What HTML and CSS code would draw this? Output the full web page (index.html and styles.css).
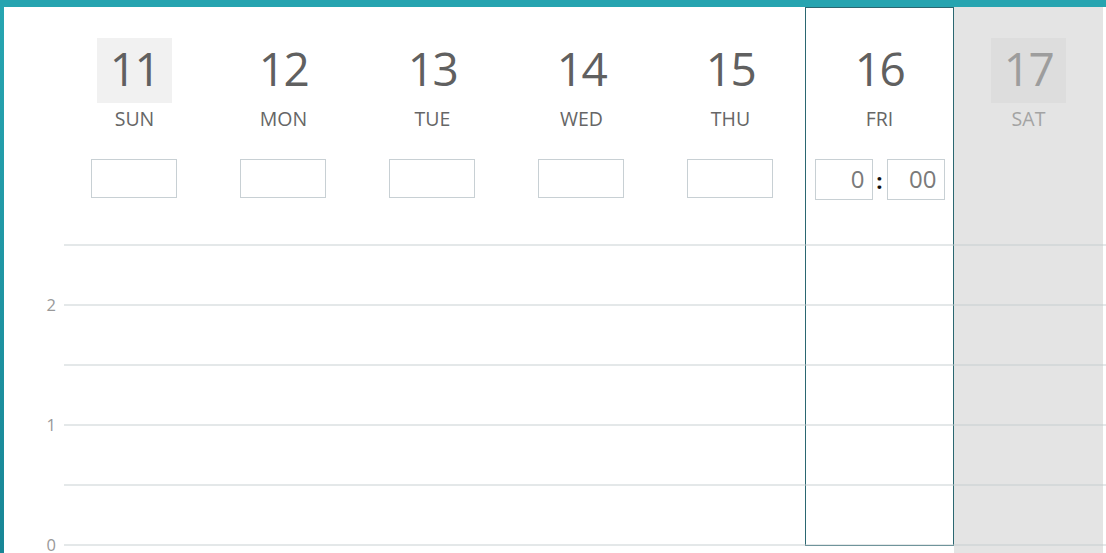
FILE: index.html
```html
<!DOCTYPE html>
<html lang="en">
<head>
    <meta charset="UTF-8" />
    <meta name="viewport" content="width=device-width, initial-scale=1" />
    <title>Week</title>
    <link rel="stylesheet" href="styles.css">
</head>
<body>

<div class="frame">
  <div class="board">
    <div class="columns">
      <div class="axis-space"></div>

      <div class="day">
        <div class="date current">11</div>
        <div class="label">SUN</div>
        <div class="slot"><input class="field" type="text" aria-label="Sunday" /></div>
      </div>
      <div class="day">
        <div class="date">12</div>
        <div class="label">MON</div>
        <div class="slot"><input class="field" type="text" aria-label="Monday" /></div>
      </div>
      <div class="day">
        <div class="date">13</div>
        <div class="label">TUE</div>
        <div class="slot"><input class="field" type="text" aria-label="Tuesday" /></div>
      </div>
      <div class="day">
        <div class="date">14</div>
        <div class="label">WED</div>
        <div class="slot"><input class="field" type="text" aria-label="Wednesday" /></div>
      </div>
      <div class="day">
        <div class="date">15</div>
        <div class="label">THU</div>
        <div class="slot"><input class="field" type="text" aria-label="Thursday" /></div>
      </div>
      <div class="day today">
        <div class="date">16</div>
        <div class="label">FRI</div>
        <div class="slot time">
          <input class="field small" type="text" value="0" aria-label="Hours" />
          <span class="colon">:</span>
          <input class="field small" type="text" value="00" aria-label="Minutes" />
        </div>
      </div>
      <div class="day weekend">
        <div class="date current">17</div>
        <div class="label">SAT</div>
      </div>
    </div>

    <div class="chart">
      <div class="tick"><span class="tick-label"></span><span class="tick-line"></span></div>
      <div class="tick"><span class="tick-label">2</span><span class="tick-line"></span></div>
      <div class="tick"><span class="tick-label"></span><span class="tick-line"></span></div>
      <div class="tick"><span class="tick-label">1</span><span class="tick-line"></span></div>
      <div class="tick"><span class="tick-label"></span><span class="tick-line"></span></div>
      <div class="tick"><span class="tick-label">0</span><span class="tick-line"></span></div>
    </div>
  </div>
</div>

</body>
</html>
```

FILE: styles.css
```css
* { box-sizing: border-box; }
html, body { height: 100%; }
body {
  margin: 0;
  font-family: 'Open Sans', 'Noto Sans', sans-serif;
  color: #606060;
  background: #fff;
  overflow: hidden;
}

.frame {
  height: 100%;
  border-top: 7px solid #26a4b0;
  padding-left: 4px;
  background: linear-gradient(180deg, #27a5b1, #188696);
}

.board {
  position: relative;
  height: 100%;
  background: #fff;
  overflow: hidden;
}

.columns {
  display: flex;
  height: 100%;
}
.axis-space { width: 56px; flex: none; }

.day {
  width: 149px;
  flex: none;
  display: flex;
  flex-direction: column;
  align-items: center;
}
.day.today {
  height: 539px;
  box-shadow: inset 0 0 0 1px #2b6771;
}
.day.weekend {
  background: #e4e4e4;
  color: #9d9d9d;
}

.date {
  margin-top: 31px;
  width: 75px;
  height: 65px;
  padding-bottom: 5px;
  display: flex;
  align-items: center;
  justify-content: center;
  font-size: 46px;
  letter-spacing: -1.5px;
  line-height: 1;
}
.date.current { background: #f1f1f1; }
.day.weekend .date.current { background: #dddddd; }

.label {
  margin-top: 3px;
  height: 26px;
  line-height: 26px;
  font-size: 19.5px;
  color: #666;
}
.day.weekend .label { color: #a3a3a3; }

.slot {
  margin-top: 27px;
  display: flex;
  align-items: center;
}
.field {
  width: 86px;
  height: 39px;
  margin-right: 1px;
  border: 1px solid #c8d0d4;
  background: #fff;
  font-family: inherit;
  outline: none;
}
.field.small {
  width: 58px;
  height: 41px;
  margin-right: 0;
  padding: 0 7px 2px;
  text-align: right;
  font-size: 24px;
  color: #7a7a7a;
}
.colon {
  width: 14px;
  text-align: center;
  font-size: 22px;
  font-weight: 700;
  color: #111;
}

.chart {
  position: absolute;
  top: 237px;
  left: 0;
  right: 0;
  pointer-events: none;
}
.tick {
  display: flex;
  align-items: center;
  height: 2px;
  margin-bottom: 58px;
}
.tick:last-child { margin-bottom: 0; }
.tick-label {
  width: 52px;
  margin-right: 8px;
  text-align: right;
  font-size: 16.5px;
  line-height: 2px;
  color: #999;
}
.tick-line {
  flex: 1;
  height: 2px;
  background: rgba(196, 203, 207, 0.45);
}
```
